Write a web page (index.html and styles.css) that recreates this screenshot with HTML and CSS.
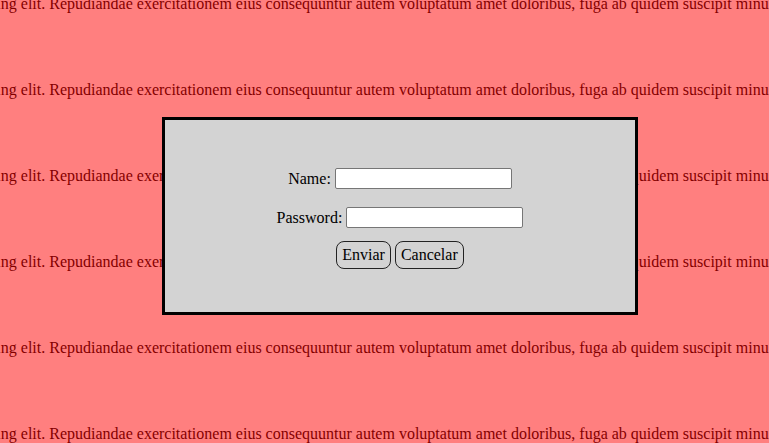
FILE: index.html
```html
<!DOCTYPE html>
<html lang="es">
<head>
<meta charset="utf-8">
<title>Modal</title>
<link rel="stylesheet" href="styles.css">
</head>
<body>
<div class="content">
  <p class="line">Lorem ipsum dolor sit amet consectetur adipisicing elit. Repudiandae exercitationem eius consequuntur autem voluptatum amet doloribus, fuga ab quidem suscipit minus nobis aspernatur labore.</p>
  <p class="line">Lorem ipsum dolor sit amet consectetur adipisicing elit. Repudiandae exercitationem eius consequuntur autem voluptatum amet doloribus, fuga ab quidem suscipit minus nobis aspernatur labore.</p>
  <p class="line">Lorem ipsum dolor sit amet consectetur adipisicing elit. Repudiandae exercitationem eius consequuntur autem voluptatum amet doloribus, fuga ab quidem suscipit minus nobis aspernatur labore.</p>
  <p class="line">Lorem ipsum dolor sit amet consectetur adipisicing elit. Repudiandae exercitationem eius consequuntur autem voluptatum amet doloribus, fuga ab quidem suscipit minus nobis aspernatur labore.</p>
  <p class="line">Lorem ipsum dolor sit amet consectetur adipisicing elit. Repudiandae exercitationem eius consequuntur autem voluptatum amet doloribus, fuga ab quidem suscipit minus nobis aspernatur labore.</p>
  <p class="line">Lorem ipsum dolor sit amet consectetur adipisicing elit. Repudiandae exercitationem eius consequuntur autem voluptatum amet doloribus, fuga ab quidem suscipit minus nobis aspernatur labore.</p>
</div>
<div class="overlay"></div>
<div class="modal">
  <form class="form">
    <div class="row"><label for="name">Name:</label><input id="name" class="field" type="text"></div>
    <div class="row row-pass"><label for="pass">Password:</label><input id="pass" class="field" type="password"></div>
    <div class="row row-btns"><button type="submit" class="btn">Enviar</button><button type="button" class="btn">Cancelar</button></div>
  </form>
</div>
</body>
</html>
```
FILE: styles.css
```css
html, body {
  margin: 0;
  padding: 0;
  width: 100%;
  height: 100%;
  overflow: hidden;
  background: #ffffff;
  font-family: "Liberation Serif", "Times New Roman", serif;
  font-size: 16px;
  color: #000;
}

.content {
  margin-top: -5px;
  margin-left: -312px;
}

.line {
  margin: 0 0 68px 0;
  line-height: 18px;
  white-space: nowrap;
}

.overlay {
  position: fixed;
  inset: 0;
  background: rgba(255, 0, 0, 0.5);
}

.modal {
  position: fixed;
  left: 162px;
  top: 117px;
  width: 476px;
  height: 198px;
  box-sizing: border-box;
  border: 3px solid #000;
  background: #d3d3d3;
  padding-top: 48px;
}

.form {
  display: flex;
  flex-direction: column;
  align-items: center;
  margin: 0;
}

.row {
  display: flex;
  align-items: center;
  justify-content: center;
  gap: 4px;
  height: 21px;
  line-height: 18px;
}

.row-pass {
  margin-top: 18px;
}

.row-btns {
  margin-top: 13px;
  height: 28px;
}

.field {
  width: 177px;
  height: 21px;
  box-sizing: border-box;
  margin: 0;
  border: 1px solid #767676;
  border-radius: 2px;
  background: #fff;
  padding: 1px 2px;
  font-family: "Liberation Sans", Arial, sans-serif;
  font-size: 13px;
}

.btn {
  height: 28px;
  box-sizing: border-box;
  margin: 0;
  padding: 0 5px;
  border: 1px solid #222;
  border-radius: 8px;
  background: transparent;
  font-family: "Liberation Serif", "Times New Roman", serif;
  font-size: 16px;
  line-height: 18px;
  color: #000;
}
```
